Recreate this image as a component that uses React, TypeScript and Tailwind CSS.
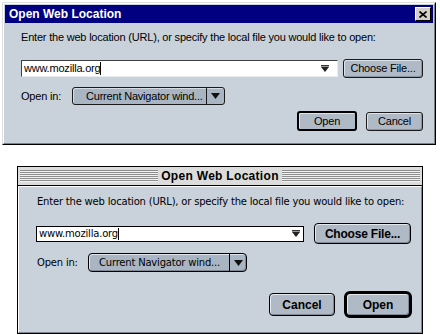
import React from "react";

const WIN = "font-['Liberation_Sans',Arial,sans-serif] text-[11px] leading-[13px] tracking-[-0.2px] text-black";
const MAC = "font-['DejaVu_Sans',Verdana,sans-serif] text-[10px] leading-[12px] tracking-[-0.2px] text-black";

function DownArrow({ className = "" }: { className?: string }) {
  return (
    <svg width="9" height="6" viewBox="0 0 9 6" className={className}>
      <polygon points="0,0 9,0 4.5,6" fill="#111" />
    </svg>
  );
}

function FieldArrow() {
  return (
    <svg width="8" height="7" viewBox="0 0 8 7">
      <rect x="0" y="0" width="8" height="1.5" fill="#333" />
      <polygon points="0,2 8,2 4,7" fill="#222" />
    </svg>
  );
}

// Windows-style dialog
function WinDialog() {
  return (
    <div className={`ml-[2px] mt-[2px] w-[434px] h-[143px] border border-t-[#dfdfdf] border-l-[#dfdfdf] border-r-black border-b-black ${WIN}`}>
      <div className="h-full flex flex-col border border-t-white border-l-white border-r-[#808080] border-b-[#808080] bg-[#c9d1da] p-px">
        {/* Title bar */}
        <div className="h-[18px] bg-[#000080] flex items-center justify-between pl-[4px] pr-[2px]">
          <span className="text-white font-bold text-[12px] tracking-normal">Open Web Location</span>
          <div className="w-[16px] h-[14px] bg-[#d4d0c8] border border-t-white border-l-white border-r-black border-b-black flex items-center justify-center">
            <svg width="8" height="7" viewBox="0 0 8 7">
              <path d="M0.5 0.5 L7.5 6.5 M7.5 0.5 L0.5 6.5" stroke="#000" strokeWidth="1.6" />
            </svg>
          </div>
        </div>

        {/* Body */}
        <div className="flex-1 flex flex-col pl-[16px] pr-[10px]">
          <p className="mt-[8px]">Enter the web location (URL), or specify the local file you would like to open:</p>

          <div className="mt-[15px] flex items-center">
            <div className="w-[317px] h-[17px] bg-white border border-t-[#404040] border-l-[#404040] border-r-[#e8ecf0] border-b-[#e8ecf0] flex items-center pl-[2px] pr-[8px]">
              <span>www.mozilla.org</span>
              <span className="w-px h-[13px] bg-black" />
              <span className="ml-auto flex"><FieldArrow /></span>
            </div>
            <button className="ml-[5px] w-[80px] h-[19px] rounded-[3px] border border-[#1a1a1a] bg-[#b0bac6] shadow-[inset_1px_1px_#dde3ea,inset_-1px_-1px_#8a95a2]">
              Choose File...
            </button>
          </div>

          <div className="mt-[9px] flex items-center">
            <span className="w-[51px]">Open in:</span>
            <div className="w-[153px] h-[18px] flex rounded-[3px] border border-[#1a1a1a] bg-[#a9b5c2] shadow-[inset_1px_1px_#d5dce4]">
              <span className="flex-1 flex items-center pl-[13px] border-r border-[#1a1a1a]">Current Navigator wind...</span>
              <span className="w-[17px] flex items-center justify-center"><DownArrow /></span>
            </div>
          </div>

          <div className="mt-[6px] flex justify-end items-center gap-[9px]">
            <button className="w-[60px] h-[20px] rounded-[3px] border-2 border-black bg-[#b0bac6] shadow-[inset_1px_1px_#dde3ea]">
              Open
            </button>
            <button className="w-[57px] h-[19px] rounded-[3px] border border-[#1a1a1a] bg-[#b0bac6] shadow-[inset_1px_1px_#dde3ea,inset_-1px_-1px_#8a95a2]">
              Cancel
            </button>
          </div>
        </div>
      </div>
    </div>
  );
}

// Mac OS-style dialog
function MacDialog() {
  const stripes = "flex-1 h-[12px] bg-[repeating-linear-gradient(to_bottom,#8e8e8e_0px,#8e8e8e_1px,#f2f2f2_1px,#f2f2f2_2px)]";
  return (
    <div className={`ml-[17px] mt-[21px] w-[406px] h-[168px] border border-black flex flex-col ${MAC}`}>
      {/* Title bar */}
      <div className="h-[19px] bg-[#dcdcdc] border-b border-black flex items-center px-[2px]">
        <div className={stripes} />
        <span className="px-[3px] font-['Liberation_Sans',Arial,sans-serif] font-bold text-[12px] tracking-[0.3px]">Open Web Location</span>
        <div className={stripes} />
      </div>

      {/* Body */}
      <div className="flex-1 flex flex-col bg-[#c9d1da] border border-t-white border-l-white border-r-[#7d858f] border-b-[#7d858f] pl-[17px] pr-[9px]">
        <p className="mt-[9px] ml-px">Enter the web location (URL), or specify the local file you would like to open:</p>

        <div className="mt-[15px] flex items-center">
          <div className="w-[268px] h-[16px] bg-white border border-black flex items-center pl-[2px] pr-[3px]">
            <span>www.mozilla.org</span>
            <span className="w-px h-[12px] bg-black" />
            <span className="ml-auto flex"><FieldArrow /></span>
          </div>
          <button className="ml-[10px] w-[97px] h-[21px] rounded-[4px] border border-black bg-[#b0bac6] shadow-[inset_1px_1px_#e4e9ee,inset_-1px_-1px_#7f8a97] font-['Liberation_Sans',Arial,sans-serif] font-bold text-[12px] tracking-[-0.2px]">
            Choose File...
          </button>
        </div>

        <div className="mt-[9px] flex items-center">
          <span className="w-[51px] ml-px">Open in:</span>
          <div className="w-[159px] h-[19px] flex rounded-[4px] border border-black bg-[#a9b5c2] shadow-[inset_1px_1px_#dfe5eb,inset_-1px_-1px_#7f8a97]">
            <span className="flex-1 flex items-center pl-[10px] border-r border-black">Current Navigator wind...</span>
            <span className="w-[16px] flex items-center justify-center"><DownArrow /></span>
          </div>
        </div>

        <div className="mt-[19px] flex justify-end items-center gap-[9px] font-['Liberation_Sans',Arial,sans-serif] font-bold text-[12px] tracking-normal">
          <button className="w-[66px] h-[23px] rounded-[4px] border border-black bg-[#b0bac6] shadow-[inset_1px_1px_#e4e9ee,inset_-1px_-1px_#7f8a97]">
            Cancel
          </button>
          <button className="w-[68px] h-[27px] rounded-[6px] border-[3px] border-black bg-[#b0bac6] shadow-[inset_1px_1px_#e4e9ee,inset_-1px_-1px_#7f8a97]">
            Open
          </button>
        </div>
      </div>
    </div>
  );
}

export default function App() {
  return (
    <div className="w-[440px] h-[335px] bg-white overflow-hidden">
      <WinDialog />
      <MacDialog />
    </div>
  );
}
